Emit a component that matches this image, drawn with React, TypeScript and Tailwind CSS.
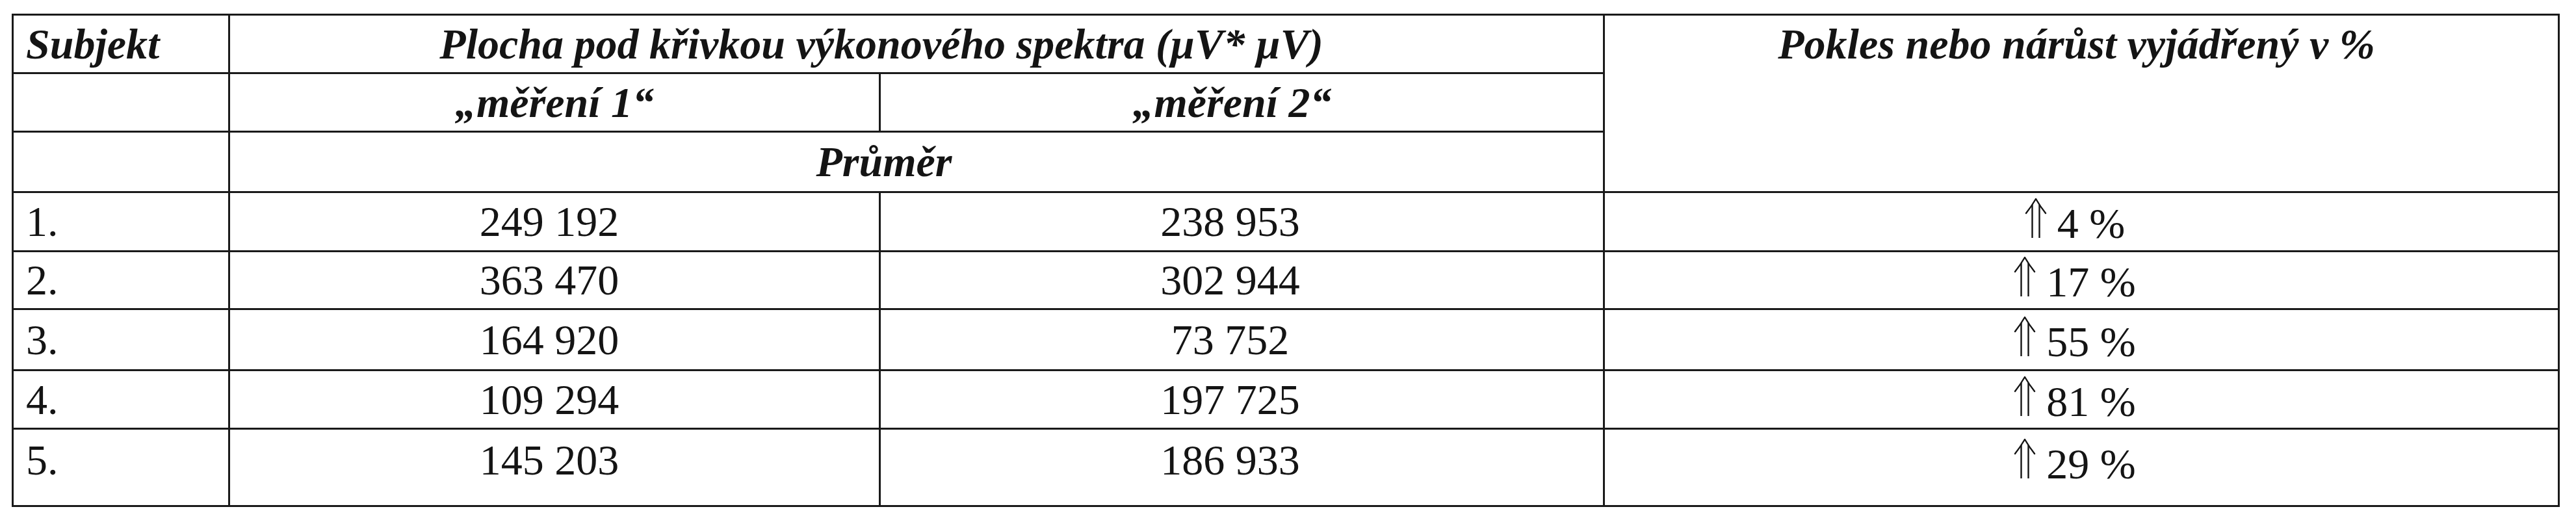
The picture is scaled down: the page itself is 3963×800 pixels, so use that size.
import React from "react";

function UpArrow() {
  return (
    <svg
      width="34"
      height="61"
      viewBox="0 0 34 61"
      className="inline-block align-baseline mr-[16px]"
      aria-hidden="true"
    >
      <path
        d="M2 23 Q10 13 17 1 Q24 13 32 23"
        fill="none"
        stroke="#141414"
        strokeWidth="2.4"
        strokeLinecap="round"
        strokeLinejoin="round"
      />
      <path d="M11.5 10 V61 M22.5 10 V61" fill="none" stroke="#141414" strokeWidth="2.4" />
    </svg>
  );
}

const rows: [string, string, string, string, number][] = [
  ["1.", "249 192", "238 953", "4 %", 91],
  ["2.", "363 470", "302 944", "17 %", 89],
  ["3.", "164 920", "73 752", "55 %", 94],
  ["4.", "109 294", "197 725", "81 %", 90],
  ["5.", "145 203", "186 933", "29 %", 119],
];

export default function App() {
  const cell = "border-[3px] border-[#1a1a1a] p-0";
  return (
    <div className="w-[3963px] h-[800px] bg-white overflow-hidden [font-family:'Liberation_Serif','Times_New_Roman',serif] text-[#141414] text-[66px] leading-[66px]">
      <div className="pt-[21px] pl-[18px]">
        <table className="table-fixed border-collapse w-[3917px] [font-family:'Liberation_Serif',serif]">
          <colgroup>
            <col className="w-[333px]" />
            <col className="w-[1001px]" />
            <col className="w-[1114px]" />
            <col className="w-[1469px]" />
          </colgroup>
          <tbody>
            <tr className="h-[90px]">
              <td className={`${cell} pl-[19px] align-middle font-bold italic`}>Subjekt</td>
              <td colSpan={2} className={`${cell} text-center align-middle font-bold italic pr-[108px]`}>
                Plocha pod křivkou výkonového spektra (µV* µV)
              </td>
              <td rowSpan={3} className={`${cell} text-center align-top pt-[11px] font-bold italic pr-[15px]`}>
                Pokles nebo nárůst vyjádřený v %
              </td>
            </tr>
            <tr className="h-[90px]">
              <td className={cell}></td>
              <td className={`${cell} text-center align-middle font-bold italic`}>„měření 1“</td>
              <td className={`${cell} text-center align-middle font-bold italic pr-[30px]`}>„měření 2“</td>
            </tr>
            <tr className="h-[93px]">
              <td className={cell}></td>
              <td colSpan={2} className={`${cell} text-center align-middle font-bold italic pr-[100px]`}>
                Průměr
              </td>
            </tr>
            {rows.map(([n, a, b, p, h], i) => {
              const last = i === rows.length - 1;
              const va = last ? "align-top pt-[14px]" : "align-middle";
              return (
                <tr key={n} style={{ height: h }}>
                  <td className={`${cell} pl-[19px] ${va}`}>{n}</td>
                  <td className={`${cell} text-center pr-[16px] ${va}`}>{a}</td>
                  <td className={`${cell} text-center pr-[36px] ${va}`}>{b}</td>
                  <td className={`${cell} text-center pr-[20px] ${va}`}>
                    <span className="whitespace-nowrap">
                      <UpArrow />
                      {p}
                    </span>
                  </td>
                </tr>
              );
            })}
          </tbody>
        </table>
      </div>
    </div>
  );
}
